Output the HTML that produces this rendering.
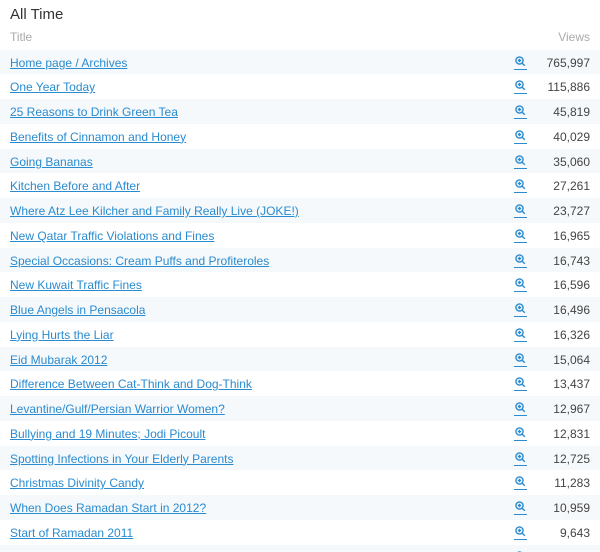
<!DOCTYPE html>
<html style="height:552px;overflow:hidden"><head><style>
body{margin:0;background:#fff;font-family:"Liberation Sans",sans-serif;width:600px;height:552px;overflow:hidden;position:relative}
h1{position:absolute;left:10px;top:6px;margin:0;font-size:15px;font-weight:normal;color:#333}
.hd{position:absolute;top:30px;font-size:12px;color:#aaa}
.row{position:absolute;left:0;width:600px;height:24.75px}
.row.s{background:#f6f9fb}
.row a{position:absolute;left:10px;top:6px;font-size:12px;color:#2a8bcf;text-decoration:underline}
.row svg{position:absolute;left:513px;top:5px}
.row span{position:absolute;right:10px;top:6px;font-size:12px;color:#444}
</style></head><body>
<h1>All Time</h1>
<div class="hd" style="left:10px">Title</div>
<div class="hd" style="right:10px">Views</div>
<div id="t"></div>
<script>
var d=[["Home page / Archives","765,997"],["One Year Today","115,886"],["25 Reasons to Drink Green Tea","45,819"],["Benefits of Cinnamon and Honey","40,029"],["Going Bananas","35,060"],["Kitchen Before and After","27,261"],["Where Atz Lee Kilcher and Family Really Live (JOKE!)","23,727"],["New Qatar Traffic Violations and Fines","16,965"],["Special Occasions: Cream Puffs and Profiteroles","16,743"],["New Kuwait Traffic Fines","16,596"],["Blue Angels in Pensacola","16,496"],["Lying Hurts the Liar","16,326"],["Eid Mubarak 2012","15,064"],["Difference Between Cat-Think and Dog-Think","13,437"],["Levantine/Gulf/Persian Warrior Women?","12,967"],["Bullying and 19 Minutes; Jodi Picoult","12,831"],["Spotting Infections in Your Elderly Parents","12,725"],["Christmas Divinity Candy","11,283"],["When Does Ramadan Start in 2012?","10,959"],["Start of Ramadan 2011","9,643"],["",""]];
var h="";
d.forEach(function(r,i){h+='<div class="row'+(i%2==0?' s':'')+'" style="top:'+(49.5+i*24.75)+'px"><a>'+r[0]+'</a><svg width="15" height="15" viewBox="0 0 15 15"><circle cx="6.5" cy="5.5" r="3.6" fill="none" stroke="#2a8bcf" stroke-width="1.4"/><path d="M4.8 5.5h3.4M6.5 3.8v3.4M9.2 8.2l2.6 2.6" stroke="#2a8bcf" stroke-width="1.4" fill="none"/><path d="M1 14.5h13" stroke="#2a8bcf" stroke-width="1"/></svg><span>'+r[1]+'</span></div>';});
document.getElementById("t").innerHTML=h;
</script>
</body></html>
